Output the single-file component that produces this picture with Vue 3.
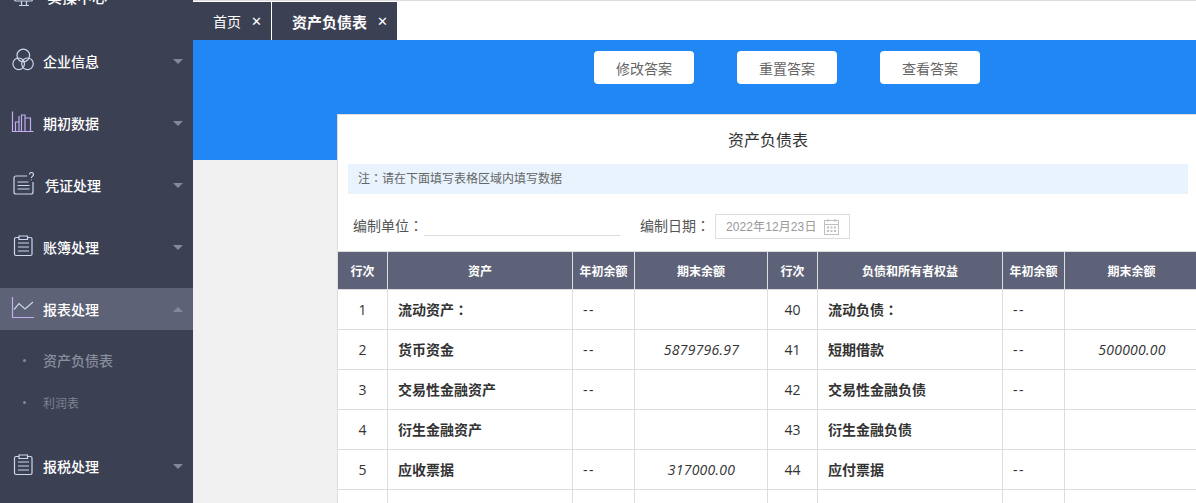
<template>
  <div class="app">
    <aside class="side">
      <div v-for="m in menus" :key="m.name" class="group">
        <div class="item" :class="[m.cls, { active: m.open }]">
          <span class="ico">
            <svg width="26" height="26" viewBox="0 0 26 26" fill="none" stroke="#ccd6ee" stroke-width="1.2">
              <template v-if="m.icon === 'screen'">
                <rect x="3.500" y="3" width="18" height="15" rx="1.500" />
                <path d="M8 22.500h10M10.500 18v4.500M15.500 18v4.500M8 7v7M12.500 7v7M17 7v7" />
              </template>
              <template v-else-if="m.icon === 'circles'">
                <circle cx="12.300" cy="7.500" r="6.300" />
                <circle cx="7.700" cy="15.800" r="5.800" />
                <circle cx="16.500" cy="15.800" r="5.800" />
              </template>
              <template v-else-if="m.icon === 'bars'">
                <path stroke="#c0aef0" d="M1.500 1.500v20H22.500" />
                <path d="M4.500 21V12h3.500v9M8 21V6M10.500 21V5h3.500v16M14 21V8h5.500v13" stroke="#c0aef0" />
              </template>
              <template v-else-if="m.icon === 'note'">
                <path d="M16 4H5a2 2 0 0 0-2 2v14a2 2 0 0 0 2 2h15a2 2 0 0 0 2-2V10" />
                <path d="M6.500 10h11M6.500 13.500h12M6.500 17h12" />
                <path d="M18.500 2.500a2 2 0 1 1 3.200 1.600c-.9.700-1.300 1-1.300 2M20.400 7.500v.8" />
              </template>
              <template v-else-if="m.icon === 'clip'">
                <path d="M8 3.500H5A1.500 1.500 0 0 0 3.500 5v15A1.500 1.500 0 0 0 5 21.500h14.500a1.500 1.500 0 0 0 1.500-1.500V5a1.500 1.500 0 0 0-1.500-1.500H16.500" />
                <path d="M8 5.500V2h8.500v3.500zM7 9h11M7 13h11M7 17h11" />
              </template>
              <template v-else>
                <path stroke="#c0aef0" d="M1.500 1v20.500H23" />
                <path d="M3 13.500l5-6 6 5.500 8-7" />
              </template>
            </svg>
          </span>
          <span class="label">{{ m.name }}</span>
          <span class="caret" :class="{ up: m.open }"></span>
        </div>
        <div v-if="m.open" class="subs">
          <div class="sub strong"><i></i>资产负债表</div>
          <div class="sub"><i></i>利润表</div>
        </div>
      </div>
    </aside>

    <main class="main">
      <div class="tabs">
        <div class="tab first">首页<span class="x">✕</span></div>
        <div class="tab second">资产负债表<span class="x">✕</span></div>
      </div>
      <div class="stage">
        <div class="btns">
          <button class="btn">修改答案</button>
          <button class="btn">重置答案</button>
          <button class="btn">查看答案</button>
        </div>
        <section class="card">
          <h1 class="title">资产负债表</h1>
          <div class="note">注<span class="colon">：</span>请在下面填写表格区域内填写数据</div>
          <div class="form">
            <span class="f-label">编制单位<span class="colon">：</span></span>
            <span class="f-input"></span>
            <span class="f-label date-label">编制日期<span class="colon">：</span></span>
            <span class="date">
              <span class="date-text">2022年12月23日</span>
              <svg width="15" height="16" viewBox="0 0 15 16" fill="none" stroke="#c0c0c0">
                <rect x="0.500" y="1.500" width="14" height="14" />
                <path d="M0.500 5.500h14M4 0v3M11 0v3" />
                <path stroke-width="2" d="M3 8.500h2M6.500 8.500h2M10 8.500h2M3 12h2M6.500 12h2M10 12h2" />
              </svg>
            </span>
          </div>
          <table class="sheet">
            <colgroup>
              <col v-for="(w, i) in cols" :key="i" :style="{ width: w + 'px' }" />
            </colgroup>
            <thead>
              <tr>
                <th>行次</th><th>资产</th><th>年初余额</th><th>期末余额</th>
                <th>行次</th><th>负债和所有者权益</th><th>年初余额</th><th>期末余额</th>
              </tr>
            </thead>
            <tbody>
              <tr v-for="(r, i) in rows" :key="i">
                <td class="num">{{ r[0] }}</td>
                <td class="name">{{ r[1].replace('：', '') }}<span v-if="r[1].endsWith('：')" class="colon">：</span></td>
                <td class="dash">{{ r[2] }}</td>
                <td class="val">{{ r[3] }}</td>
                <td class="num">{{ r[4] }}</td>
                <td class="name">{{ r[5].replace('：', '') }}<span v-if="r[5].endsWith('：')" class="colon">：</span></td>
                <td class="dash">{{ r[6] }}</td>
                <td class="val">{{ r[7] }}</td>
              </tr>
            </tbody>
          </table>
        </section>
      </div>
    </main>
  </div>
</template>

<script setup>
const menus = [
  { name: '实操中心', icon: 'screen', cls: 'top' },
  { name: '企业信息', icon: 'circles' },
  { name: '期初数据', icon: 'bars' },
  { name: '凭证处理', icon: 'note', cls: 'shift' },
  { name: '账簿处理', icon: 'clip' },
  { name: '报表处理', icon: 'line', open: true },
  { name: '报税处理', icon: 'clip' },
]
const cols = [50, 185, 62, 133, 50, 185, 62, 134]
const rows = [
  ['1', '流动资产：', '--', '', '40', '流动负债：', '--', ''],
  ['2', '货币资金', '--', '5879796.97', '41', '短期借款', '--', '500000.00'],
  ['3', '交易性金融资产', '--', '', '42', '交易性金融负债', '--', ''],
  ['4', '衍生金融资产', '', '', '43', '衍生金融负债', '', ''],
  ['5', '应收票据', '--', '317000.00', '44', '应付票据', '--', ''],
  ['', '', '', '', '', '', '', ''],
]
</script>

<style>
html, body { margin: 0; height: 503px; overflow: hidden; background: #fff; }
</style>

<style scoped>
.app {
  display: flex;
  width: 1196px;
  height: 503px;
  overflow: hidden;
  font-family: "Noto Sans CJK SC", "Noto Sans", sans-serif;
  font-size: 14px;
  color: #333;
}
.colon { font-family: "Noto Sans CJK TC", sans-serif; }
.side {
  width: 193px;
  flex: none;
  background: #3c4053;
  overflow: hidden;
  padding-top: 30px;
  box-sizing: border-box;
}
.item {
  height: 42px;
  margin-bottom: 20px;
  display: flex;
  align-items: center;
  padding: 0 10px 0 11px;
  color: #fff;
  font-weight: 500;
}
.item.top { margin-top: -55px; margin-bottom: 23px; }
.item.top .label { font-size: 15px; margin-left: 4px; }
.item.active { background: #5e6277; margin-bottom: 10px; }
.ico { width: 32px; height: 26px; flex: none; display: flex; }
.shift .label { margin-left: 2px; }
.caret {
  margin-left: auto;
  width: 0;
  height: 0;
  border-left: 5px solid transparent;
  border-right: 5px solid transparent;
  border-top: 5px solid #85889a;
}
.caret.up { border-top: 0; border-bottom: 5px solid #85889a; }
.subs { padding-bottom: 21px; }
.sub {
  height: 42px;
  display: flex;
  align-items: center;
  padding-left: 23px;
  padding-bottom: 2px;
  box-sizing: border-box;
  color: #7f8291;
  font-size: 12px;
}
.sub.strong { font-size: 14px; font-weight: 500; color: #8a8d9b; }
.sub i {
  width: 3px;
  height: 3px;
  border-radius: 50%;
  background: #85889a;
  margin-right: 17px;
}
.main { flex: 1; min-width: 0; display: flex; flex-direction: column; }
.tabs {
  height: 38px;
  flex: none;
  display: flex;
  padding-top: 1px;
  border-top: 1px solid #ddd;
  background: #fff;
}
.tab {
  background: #3c4053;
  color: #fff;
  display: flex;
  align-items: center;
}
.tab.first { width: 78px; padding-left: 20px; box-sizing: border-box; margin-right: 1px; }
.tab.second { width: 125px; padding-left: 20px; box-sizing: border-box; font-weight: 700; font-size: 15px; }
.x { font-size: 13px; font-weight: 700; margin-left: 10px; font-family: "DejaVu Sans", sans-serif; }
.stage {
  flex: 1;
  min-height: 0;
  overflow: hidden;
  background: linear-gradient(#2087f5 120px, #f0f0f0 120px);
}
.btns { display: flex; gap: 43px; padding: 11px 0 0 401px; }
.btn {
  width: 100px;
  height: 33px;
  border: 0;
  border-radius: 4px;
  background: #fff;
  color: #666;
  font: inherit;
}
.card {
  margin: 30px 0 0 144px;
  width: 859px;
  height: 400px;
  background: #fff;
  border-left: 1px solid #ddd;
  border-top: 1px solid #ddd;
  box-sizing: border-box;
  overflow: hidden;
}
.title {
  margin: 0;
  height: 49px;
  line-height: 48px;
  padding-left: 2px;
  text-align: center;
  font-size: 16px;
  font-weight: 400;
  color: #333;
}
.note {
  margin: 0 0 0 10px;
  width: 840px;
  height: 30px;
  line-height: 28px;
  padding-left: 10px;
  box-sizing: border-box;
  background: #e8f3fe;
  color: #666;
  font-size: 12px;
}
.form {
  height: 57px;
  box-sizing: border-box;
  padding: 8px 0 0 15px;
  display: flex;
  align-items: center;
  color: #555;
}
.f-label { padding-bottom: 4px; }
.f-input { width: 196px; height: 18px; border-bottom: 1px solid #ddd; margin-left: 1px; }
.date-label { margin-left: 20px; }
.date {
  margin-left: 5px;
  width: 135px;
  height: 25px;
  box-sizing: border-box;
  border: 1px solid #ddd;
  padding: 0 10px 0 10px;
  display: flex;
  align-items: center;
  justify-content: space-between;
  color: #999;
  font-size: 12px;
  font-family: "Liberation Sans", "Noto Sans CJK SC", sans-serif;
}
.date-text { padding-bottom: 2px; letter-spacing: .1px; }
.sheet {
  table-layout: fixed;
  width: 861px;
  margin-left: -1px;
  border-collapse: collapse;
}
th, td { border: 1px solid #ddd; padding: 0; box-sizing: border-box; }
th {
  height: 38px;
  background: #5e6278;
  color: #fff;
  font-size: 12px;
  font-weight: 700;
}
td { height: 40px; font-size: 14px; color: #333; }
.num { text-align: center; font-family: "Open Sans", sans-serif; }
.name { padding: 0 0 2px 10px; font-weight: 700; }
.dash { padding-left: 10px; font-family: "Open Sans", sans-serif; letter-spacing: 1.5px; }
.val { text-align: center; padding-left: 1px; font-style: italic; letter-spacing: .25px; font-family: "Open Sans", sans-serif; }
</style>
